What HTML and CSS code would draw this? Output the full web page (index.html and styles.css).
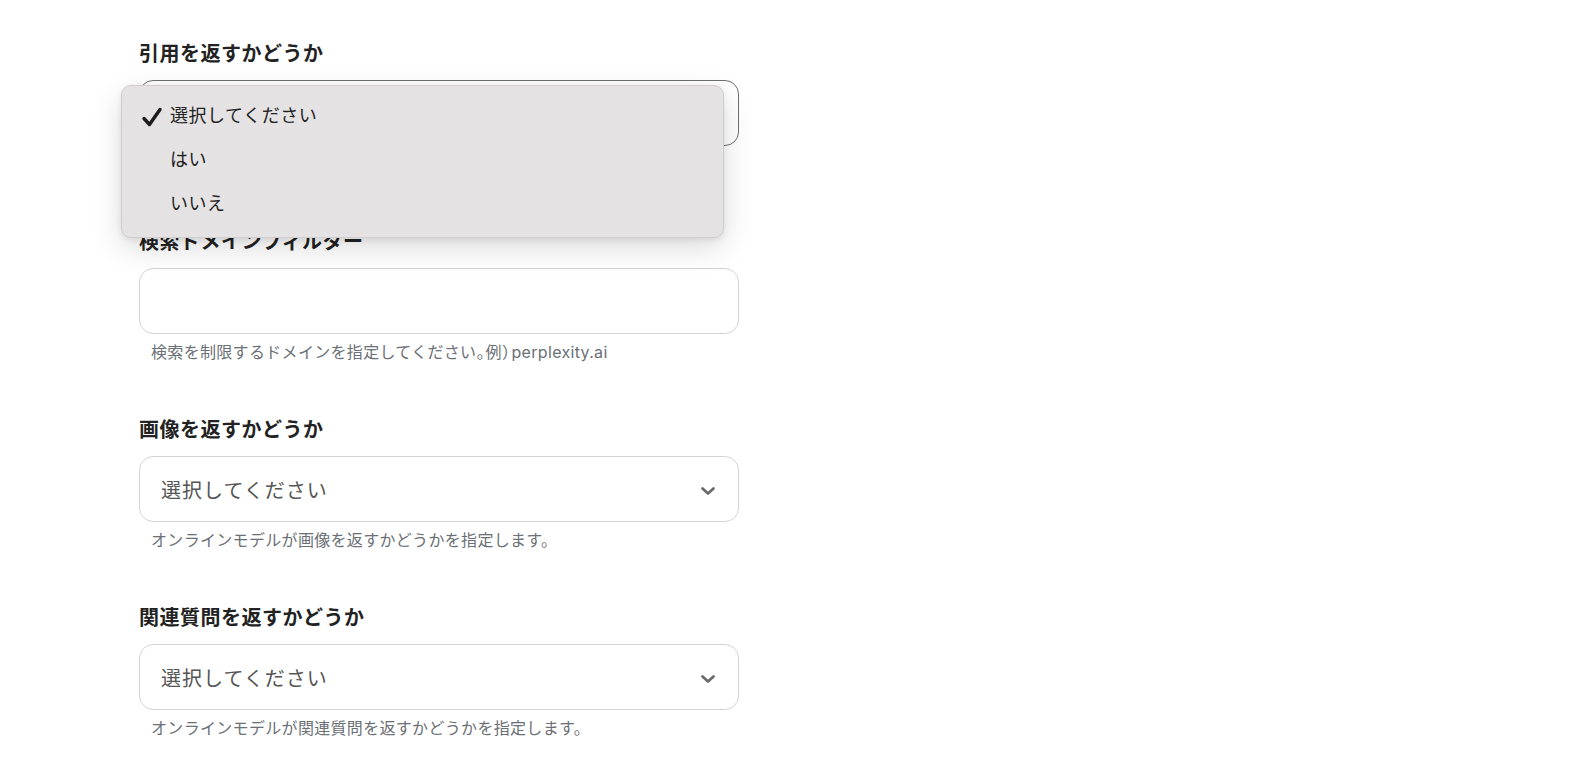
FILE: index.html
```html
<!DOCTYPE html>
<html lang="ja">
<head>
<meta charset="utf-8">
<link rel="stylesheet" href="styles.css">
</head>
<body>
<form class="form">
  <div class="field">
    <label class="label">引用を返すかどうか</label>
    <div class="control-wrap">
      <div class="control control--focused"></div>
      <div class="menu">
        <div class="menu-item">
          <svg class="check" width="22" height="22" viewBox="0 0 22 22"><path d="M3 12.5 L8.5 18.5 L19 3.5" fill="none" stroke="#1c1c1c" stroke-width="3.4" stroke-linecap="round" stroke-linejoin="round"/></svg>
          <span>選択してください</span>
        </div>
        <div class="menu-item"><span>はい</span></div>
        <div class="menu-item"><span>いいえ</span></div>
      </div>
    </div>
    <p class="help">&nbsp;</p>
  </div>

  <div class="field">
    <label class="label">検索ドメインフィルター</label>
    <div class="control-wrap">
      <div class="control"></div>
    </div>
    <p class="help">検索を制限するドメインを指定してください<span class="palt">。例）</span>perplexity.ai</p>
  </div>

  <div class="field">
    <label class="label">画像を返すかどうか</label>
    <div class="control-wrap">
      <div class="control control--select">
        <span class="value">選択してください</span>
        <svg class="chev" width="16" height="10" viewBox="0 0 16 10"><path d="M2.5 2.5 L8 7.5 L13.5 2.5" fill="none" stroke="#6b6b6b" stroke-width="2.8" stroke-linecap="round" stroke-linejoin="round"/></svg>
      </div>
    </div>
    <p class="help">オンラインモデルが画像を返すかどうかを指定します。</p>
  </div>

  <div class="field">
    <label class="label">関連質問を返すかどうか</label>
    <div class="control-wrap">
      <div class="control control--select">
        <span class="value">選択してください</span>
        <svg class="chev" width="16" height="10" viewBox="0 0 16 10"><path d="M2.5 2.5 L8 7.5 L13.5 2.5" fill="none" stroke="#6b6b6b" stroke-width="2.8" stroke-linecap="round" stroke-linejoin="round"/></svg>
      </div>
    </div>
    <p class="help">オンラインモデルが関連質問を返すかどうかを指定します。</p>
  </div>
</form>
</body>
</html>
```

FILE: styles.css
```css
* { box-sizing: border-box; }
html, body { margin: 0; padding: 0; background: #ffffff; }
body {
  font-family: Inter, "Noto Sans CJK JP", "Noto Sans", sans-serif;
  color: #1f1f1f;
  width: 1570px;
  height: 778px;
  overflow: hidden;
}
.form {
  padding: 40px 0 0 139px;
  display: flex;
  flex-direction: column;
  gap: 52px;
}
.field {
  width: 600px;
  display: flex;
  flex-direction: column;
}
.label {
  display: block;
  font-size: 20px;
  line-height: 28px;
  font-weight: 600;
  color: #222222;
  height: 28px;
  letter-spacing: 0.5px;
}
.control-wrap {
  position: relative;
  margin-top: 12px;
}
.control {
  height: 66px;
  border: 1px solid #d4d4d8;
  border-radius: 14px;
  background: #ffffff;
}
.control--focused {
  border-color: #6e6e6e;
}
.control--select {
  display: flex;
  align-items: center;
  justify-content: space-between;
  padding: 0 22px 0 21px;
}
.value {
  font-size: 20px;
  color: #555555;
  letter-spacing: 1px;
}
.chev { margin-top: 3px; }
.help {
  margin: 6px 0 0 12px;
  font-size: 16px;
  line-height: 24px;
  color: #6b6f76;
  letter-spacing: 0.32px;
}
.palt {
  font-feature-settings: "palt";
  letter-spacing: 1px;
}
.menu {
  position: absolute;
  left: -18px;
  top: 5px;
  width: 603px;
  height: 153px;
  background: #e4e2e3;
  border: 1px solid #cfcdce;
  border-radius: 10px;
  box-shadow: 0 10px 30px rgba(0, 0, 0, 0.14), 0 2px 6px rgba(0, 0, 0, 0.08);
  padding-top: 6px;
  z-index: 10;
}
.menu-item {
  height: 44px;
  display: flex;
  align-items: center;
  padding-left: 48px;
  position: relative;
  font-size: 18px;
  color: #222222;
  letter-spacing: 0.55px;
}
.check {
  position: absolute;
  left: 19px;
  top: 14px;
}
```
